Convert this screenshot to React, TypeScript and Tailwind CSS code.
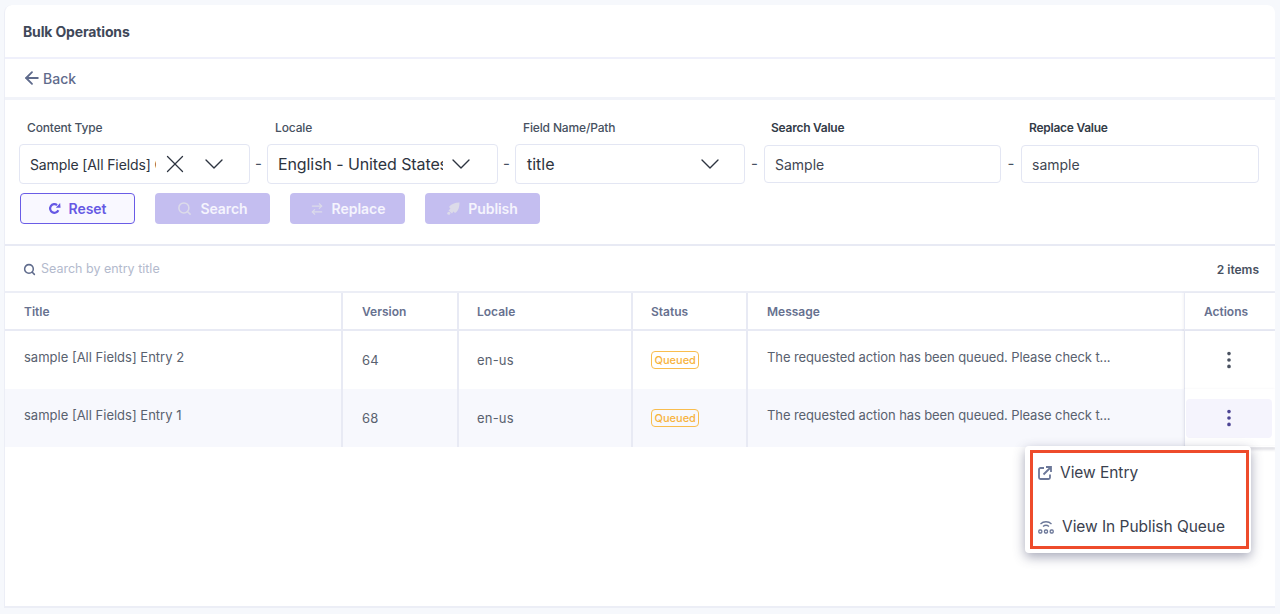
import { ArrowLeft, ChevronDown, X, Search, ArrowRightLeft, EllipsisVertical } from "lucide-react";

const FONT = "[font-family:Inter,'Liberation_Sans',sans-serif]";

function Label({ children, dark, className = "" }: { children: string; dark?: boolean; className?: string }) {
  return (
    <div className={`h-[18px] text-[12px] leading-[18px] ${dark ? "font-semibold tracking-[-0.25px] text-[#333b47]" : "font-medium tracking-[-0.15px] text-[#475161]"} ${className}`}>
      {children}
    </div>
  );
}

function SelectBox({ className = "", children }: { className?: string; children: React.ReactNode }) {
  return (
    <div className={`flex h-[40px] items-center rounded-[4px] border border-[#e3e6f3] bg-white pl-[10px] text-[#2d3440] ${className}`}>
      {children}
    </div>
  );
}

function Dash({ className = "" }: { className?: string }) {
  return <div className={`flex h-[40px] items-center justify-center text-[15px] text-[#475161] ${className}`}>-</div>;
}

function DisabledBtn({ icon, label }: { icon: React.ReactNode; label: string }) {
  return (
    <div className="flex h-[31px] w-[115px] items-center justify-center gap-[8px] rounded-[4px] bg-[#c4bef0] text-[14px] font-semibold tracking-[-0.05px] text-[#f5f4fd]">
      {icon}
      <span>{label}</span>
    </div>
  );
}

function Row({ title, version, alt }: { title: string; version: string; alt?: boolean }) {
  const bg = alt ? "bg-[#f7f8fd]" : "bg-white";
  const text = "text-[13px] text-[#59616f]";
  return (
    <>
      <div className={`${bg} ${text} h-[58px] border-r-2 border-[#e8eaf4] pl-[19px] pt-[17px] leading-[18px]`}>{title}</div>
      <div className={`${bg} ${text} flex h-[58px] items-center border-r-2 border-[#e8eaf4] pl-[19px] pt-[2px] tracking-[0.2px]`}>{version}</div>
      <div className={`${bg} ${text} flex h-[58px] items-center border-r-2 border-[#e8eaf4] pl-[18px] pt-[2px] tracking-[0.2px]`}>en-us</div>
      <div className={`${bg} flex h-[58px] items-center border-r-2 border-[#e8eaf4] pl-[18px]`}>
        <span className="rounded-[4px] border border-[#f9bd4e] px-[2.5px] text-[11px] font-medium leading-[16px] text-[#f7b33c]">Queued</span>
      </div>
      <div className={`${bg} ${text} h-[58px] pl-[19px] pt-[17px] leading-[18px] tracking-[-0.1px]`}>The requested action has been queued. Please check t...</div>
      <div className="flex h-[58px] items-center justify-center border-l border-[#e3e5ef] bg-white pr-[2px] shadow-[-1px_0_2px_rgba(100,100,130,0.08)]">
        <div className={`flex h-[39px] w-[86px] items-center justify-center rounded-[4px] ${alt ? "bg-[#f5f4fd] text-[#4c4494]" : "text-[#4a5261]"}`}>
          <EllipsisVertical size={22} strokeWidth={2} />
        </div>
      </div>
    </>
  );
}

export default function App() {
  const head = "flex h-[38px] items-center pt-[2px] text-[12px] font-semibold text-[#67718f]";
  return (
    <div className={`${FONT} h-[614px] w-[1280px] overflow-hidden bg-[#f6f8fc] pl-[4px] pr-[5px] pt-[5px]`}>
      <div className="relative h-[603px] overflow-hidden rounded-t-[8px] border-b-2 border-l border-[#eceef6] bg-white">
        <div className="flex h-[54px] items-center border-b-2 border-[#eff0fb] pl-[18px] text-[14px] font-bold tracking-[-0.15px] text-[#3f4859]">
          Bulk Operations
        </div>
        <div className="flex h-[41px] items-center gap-[1px] border-b-[3px] border-[#f1f3f9] pl-[17px] text-[14px] font-medium text-[#5f6b8c]">
          <ArrowLeft size={20} strokeWidth={2.2} />
          <span>Back</span>
        </div>

        <div className="h-[146px] border-b-2 border-[#e8eaf4] pl-[14px] pt-[19px]">
          <div className="flex items-start">
            <div className="w-[231px]">
              <Label className="pl-[8px]">Content Type</Label>
              <SelectBox className="mt-[7px] w-[231px]">
                <span className="w-[126px] overflow-hidden whitespace-nowrap text-[14px] tracking-[-0.12px]">Sample [All Fields] Content</span>
                <X size={30} strokeWidth={1} className="ml-[4px]" />
                <ChevronDown size={32} strokeWidth={1} className="ml-[8px]" />
              </SelectBox>
            </div>
            <Dash className="mt-[25px] w-[17px]" />
            <div className="w-[231px]">
              <Label className="pl-[8px]">Locale</Label>
              <SelectBox className="mt-[7px] w-[231px]">
                <span className="w-[165px] overflow-hidden whitespace-nowrap text-[16px] tracking-[-0.1px]">English - United States</span>
                <ChevronDown size={32} strokeWidth={1} className="ml-[2px]" />
              </SelectBox>
            </div>
            <Dash className="mt-[25px] w-[17px]" />
            <div className="w-[230px]">
              <Label className="pl-[8px]">Field Name/Path</Label>
              <SelectBox className="mt-[7px] w-[230px] pl-[11px]">
                <span className="w-[167px] text-[16px]">title</span>
                <ChevronDown size={32} strokeWidth={1} />
              </SelectBox>
            </div>
            <Dash className="mt-[25px] w-[19px]" />
            <div className="w-[237px]">
              <Label dark className="pl-[7px]">Search Value</Label>
              <div className="mt-[8px] flex h-[38px] items-center rounded-[4px] border border-[#e3e6f3] pl-[10px] text-[14px] text-[#3f4652]">Sample</div>
            </div>
            <Dash className="mt-[25px] w-[20px]" />
            <div className="w-[238px]">
              <Label dark className="pl-[8px]">Replace Value</Label>
              <div className="mt-[8px] flex h-[38px] items-center rounded-[4px] border border-[#e3e6f3] pl-[10px] text-[14px] text-[#3f4652]">sample</div>
            </div>
          </div>
          <div className="mt-[9px] flex gap-[20px] pl-[1px]">
            <div className="flex h-[31px] w-[115px] items-center justify-center gap-[7px] rounded-[4px] border border-[#6a5ce6] bg-[#f9f8ff] text-[14px] font-semibold text-[#6658e4]">
              <svg width="13" height="13" viewBox="0 0 12 12" fill="none">
                <path d="M9.6 7.6 A4 4 0 1 1 8.4 2.8" stroke="currentColor" strokeWidth="2" />
                <path d="M7.2 5.2 L11.6 5.2 L11.2 1 Z" fill="currentColor" />
              </svg>
              <span>Reset</span>
            </div>
            <DisabledBtn icon={<Search size={15} strokeWidth={2.4} className="text-[#dcdbe9]" />} label="Search" />
            <DisabledBtn icon={<ArrowRightLeft size={14} strokeWidth={2} className="text-[#dcdbe9]" />} label="Replace" />
            <DisabledBtn
              icon={
                <svg width="13" height="13" viewBox="0 0 13 13" fill="#dcdbe9">
                  <path d="M12.5 0.5 C12.5 5 11.5 9 8 11 L6.5 9.5 L5 11.5 L1.5 8.5 L3.5 6.5 L2 5 C4 2 8 0.5 12.5 0.5 Z" />
                  <circle cx="1.8" cy="11.2" r="1.5" />
                </svg>
              }
              label="Publish"
            />
          </div>
        </div>

        <div className="flex h-[47px] items-center justify-between border-b-2 border-[#eceef6] pl-[18px] pr-[16px] pt-[2px]">
          <div className="flex items-center gap-[5px]">
            <Search size={13} strokeWidth={2.8} className="text-[#5f6b8c]" />
            <span className="text-[12.5px] text-[#b3bacd]">Search by entry title</span>
          </div>
          <span className="text-[12px] font-semibold text-[#475161]">2 items</span>
        </div>

        <div className="grid grid-cols-[338px_116px_174px_115px_436px_1fr]">
          <div className={`${head} border-b-2 border-r-2 border-[#e8eaf4] pl-[19px]`}>Title</div>
          <div className={`${head} border-b-2 border-r-2 border-[#e8eaf4] pl-[19px]`}>Version</div>
          <div className={`${head} border-b-2 border-r-2 border-[#e8eaf4] pl-[18px]`}>Locale</div>
          <div className={`${head} border-b-2 border-r-2 border-[#e8eaf4] pl-[18px]`}>Status</div>
          <div className={`${head} border-b-2 border-[#e8eaf4] pl-[19px]`}>Message</div>
          <div className={`${head} justify-center border-b-2 border-l border-[#e8eaf4] pr-[8px] shadow-[-1px_0_2px_rgba(100,100,130,0.08)]`}>Actions</div>
          <Row title="sample [All Fields] Entry 2" version="64" />
          <Row title="sample [All Fields] Entry 1" version="68" alt />
        </div>

        <div className="absolute left-[1179px] top-[441px] h-[1px] w-[92px] shadow-[0_2px_3px_rgba(60,60,90,0.45)]" />

        <div className="absolute left-[1020px] top-[441px] h-[107px] w-[226px] rounded-[4px] bg-white shadow-[0_4px_12px_rgba(60,65,100,0.45)]">
          <div className="pl-[13px] pt-[15px] text-[#3a414e]">
            <div className="flex h-[24px] items-center text-[15.5px] tracking-[-0.05px]">
              <svg width="14" height="14" viewBox="0 0 14 14" fill="none" stroke="#6c7899" strokeWidth="1.8">
                <path d="M6 2 H2.5 A1.5 1.5 0 0 0 1 3.5 V11.5 A1.5 1.5 0 0 0 2.5 13 H10.5 A1.5 1.5 0 0 0 12 11.5 V8.5" />
                <path d="M5.5 8.5 L12.5 1.5 M8 1 H13 V6" />
              </svg>
              <span className="ml-[8px]">View Entry</span>
            </div>
            <div className="mt-[30px] flex h-[24px] items-center text-[15.5px] tracking-[-0.05px]">
              <svg width="16" height="14" viewBox="0 0 16 14" fill="none" stroke="#6c7899" strokeWidth="1.3">
                <path d="M2.5 4 C5.5 1 10.5 1 13.5 4" />
                <path d="M5 6.5 C6.8 5 9.2 5 11 6.5" />
                <rect x="0.8" y="10" width="3" height="3" rx="1" />
                <rect x="6.5" y="10" width="3" height="3" rx="1" />
                <rect x="12.2" y="10" width="3" height="3" rx="1" />
              </svg>
              <span className="ml-[8px]">View In Publish Queue</span>
            </div>
          </div>
          <div className="absolute left-[5px] top-[4px] h-[99px] w-[219px] border-[3px] border-[#ee4b2b]" />
        </div>
      </div>
    </div>
  );
}
